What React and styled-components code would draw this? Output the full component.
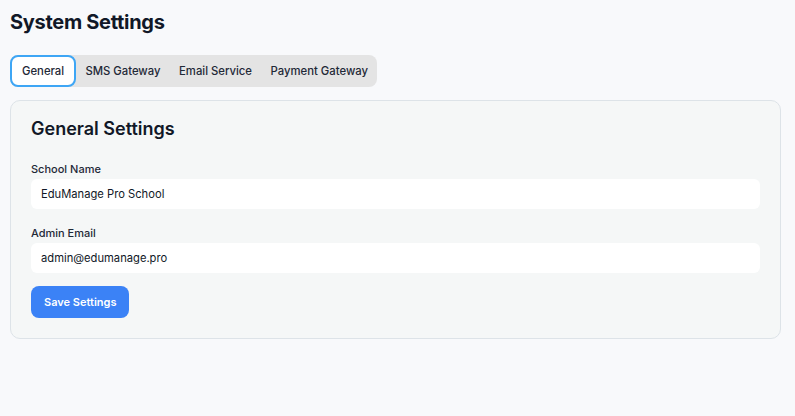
import React, { useState } from "react";
import styled, { createGlobalStyle } from "styled-components";

const GlobalStyle = createGlobalStyle`
  html, body {
    margin: 0;
    background: #f8f9fb;
    font-family: Inter, "Noto Sans", sans-serif;
    color: #111827;
  }
`;

const Page = styled.div`
  padding: 10px 14px 10px 10px;
`;

const Title = styled.h1`
  margin: 0 0 21px;
  font-size: 20px;
  line-height: 24px;
  font-weight: 700;
  letter-spacing: -0.3px;
`;

const TabBar = styled.div`
  display: inline-flex;
  background: #e4e4e4;
  border-radius: 8px;
  margin-bottom: 13px;
`;

const Tab = styled.button`
  height: 32px;
  box-sizing: border-box;
  padding: 0 ${(p) => (p.$active ? "10px" : "9.3px")};
  border: ${(p) => (p.$active ? "2px solid #3ea6f5" : "none")};
  border-radius: 8px;
  background: ${(p) => (p.$active ? "#fff" : "transparent")};
  font-family: inherit;
  font-size: 11.3px;
  font-weight: 500;
  color: #1f2937;
  cursor: pointer;
`;

const Card = styled.section`
  background: #f5f7f7;
  border: 1px solid #dde3e8;
  border-radius: 10px;
  padding: 17px 20px 20px;
`;

const CardTitle = styled.h2`
  margin: 0 0 22px;
  font-size: 18px;
  line-height: 22px;
  font-weight: 600;
`;

const Fields = styled.div`
  display: flex;
  flex-direction: column;
  gap: 17px;
  margin-bottom: 13px;
`;

const Field = styled.div`
  display: flex;
  flex-direction: column;
  gap: 3px;
`;

const Label = styled.label`
  font-size: 11px;
  line-height: 14px;
  font-weight: 500;
  color: #1f2937;
`;

const Input = styled.input`
  height: 30px;
  box-sizing: border-box;
  border: none;
  border-radius: 6px;
  background: #fff;
  padding: 0 10px;
  font-family: inherit;
  font-size: 11.2px;
  color: #111827;
  outline: none;
`;

const SaveButton = styled.button`
  height: 32px;
  padding: 0 13px;
  border: none;
  border-radius: 8px;
  background: #3b82f6;
  color: #fff;
  font-family: inherit;
  font-size: 11px;
  font-weight: 600;
  cursor: pointer;
`;

const tabs = ["General", "SMS Gateway", "Email Service", "Payment Gateway"];

export default function App() {
  const [active, setActive] = useState("General");
  return (
    <>
      <GlobalStyle />
      <Page>
        <Title>System Settings</Title>
        <TabBar>
          {tabs.map((t) => (
            <Tab key={t} $active={t === active} onClick={() => setActive(t)}>
              {t}
            </Tab>
          ))}
        </TabBar>
        <Card>
          <CardTitle>General Settings</CardTitle>
          <Fields>
            <Field>
              <Label>School Name</Label>
              <Input defaultValue="EduManage Pro School" />
            </Field>
            <Field>
              <Label>Admin Email</Label>
              <Input defaultValue="admin@edumanage.pro" />
            </Field>
          </Fields>
          <SaveButton>Save Settings</SaveButton>
        </Card>
      </Page>
    </>
  );
}
